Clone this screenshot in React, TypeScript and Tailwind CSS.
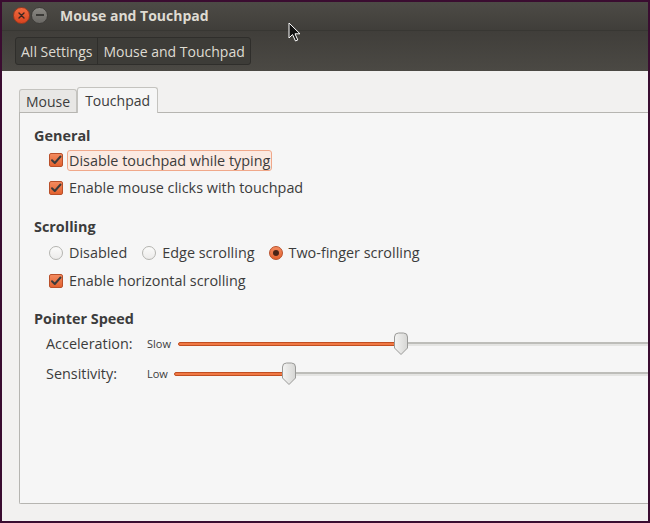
import React from 'react';

const font = { fontFamily: '"Open Sans", "Noto Sans", sans-serif' };

function CheckBox() {
    return (
        <span className="flex h-[14px] w-[14px] shrink-0 items-center justify-center rounded-[2px] border border-[#b9502a] bg-gradient-to-b from-[#f38a5e] to-[#e2622f]">
            <svg width="12" height="12" viewBox="0 0 12 12" fill="none">
                <path d="M2 6.2L4.8 9L10.5 2.5" stroke="#3b3b3b" strokeWidth="2" strokeLinecap="round" strokeLinejoin="round" />
            </svg>
        </span>
    );
}

function Radio({ on, className = '' }: { on?: boolean; className?: string }) {
    if (on) {
        return (
            <span className={`flex h-[14px] w-[14px] shrink-0 items-center justify-center rounded-full border border-[#b9502a] bg-gradient-to-b from-[#f38a5e] to-[#e2622f] ${className}`}>
                <span className="h-[6px] w-[6px] rounded-full bg-[#4a2417]" />
            </span>
        );
    }
    return <span className={`block h-[14px] w-[14px] shrink-0 rounded-full border border-[#b4b4b0] bg-gradient-to-b from-[#fbfbfa] to-[#ecebea] ${className}`} />;
}

function Thumb() {
    return (
        <svg width="16" height="24" viewBox="0 0 16 24" className="relative -mx-[8px] shrink-0">
            <defs>
                <linearGradient id="tg" x1="0" y1="0" x2="1" y2="0">
                    <stop offset="0" stopColor="#f4f4f3" />
                    <stop offset="1" stopColor="#d6d6d4" />
                </linearGradient>
            </defs>
            <path d="M1.5 5 Q1.5 1 5.5 1 H10.5 Q14.5 1 14.5 5 V16 L8 22.5 L1.5 16 Z" fill="url(#tg)" stroke="#9a9a98" strokeWidth="1" />
        </svg>
    );
}

function Slider({ label, small, fill, gap }: { label: string; small: string; fill: number; gap: number }) {
    return (
        <div className="flex h-[30px] items-center">
            <span className="w-[113px] pl-[12px] text-[#3c3c3c]">{label}</span>
            <span className="text-[11px] text-[#3c3c3c]">{small}</span>
            <div className="flex flex-1 items-center" style={{ marginLeft: gap }}>
                <div className="h-[4px] rounded-l-full border border-[#c14f22] bg-[#f07844]" style={{ width: fill }} />
                <Thumb />
                <div className="flex flex-1 flex-col">
                    <div className="h-[2px] bg-[#bdbdb9]" />
                    <div className="h-[2px] bg-[#e4e4e2]" />
                </div>
            </div>
        </div>
    );
}

export default function App() {
    return (
        <div className="relative h-[523px] w-[650px] overflow-hidden bg-[#3a0c30] p-[2px]" style={font}>
            <div className="flex h-full flex-col">
                {/* title bar */}
                <div className="flex h-[28px] items-center bg-gradient-to-b from-[#4d4b46] to-[#403e3a] pb-[2px] pl-[11px]">
                    <span className="flex h-[17px] w-[17px] items-center justify-center rounded-full border border-[#9a3a1f] bg-gradient-to-b from-[#f26a3f] to-[#d8441f]">
                        <svg width="7" height="7" viewBox="0 0 7 7">
                            <path d="M1 1L6 6M6 1L1 6" stroke="#3a2620" strokeWidth="1.4" strokeLinecap="round" />
                        </svg>
                    </span>
                    <span className="ml-[1px] flex h-[17px] w-[17px] items-center justify-center rounded-full border border-[#3f3d3a] bg-gradient-to-b from-[#8a8883] to-[#6a6864]">
                        <span className="h-[1.5px] w-[8px] bg-[#3a3936]" />
                    </span>
                    <span className="ml-[12px] text-[14px] font-bold text-[#dfdbd2]">Mouse and Touchpad</span>
                </div>
                {/* toolbar */}
                <div className="flex h-[41px] items-center border-t border-[#383733] bg-gradient-to-b from-[#403e3a] to-[#4b4944] pl-[13px]">
                    <div className="flex h-[28px] rounded-[3px] border border-[#2f2e2b] bg-[#3d3c38] text-[14px] text-[#dfdbd2]">
                        <span className="flex items-center px-[5px]">All Settings</span>
                        <span className="flex items-center border-l border-[#2f2e2b] px-[5px]">Mouse and Touchpad</span>
                    </div>
                </div>
                {/* content */}
                <div className="flex flex-1 flex-col bg-[#f2f1f0] pt-[17px] pb-[17px] pl-[17px] text-[#3c3c3c]">
                    <div className="flex h-[24px] items-end text-[14px]">
                        <span className="flex h-[23px] items-center rounded-t-[3px] border border-b-0 border-[#c4c3bf] bg-[#e8e7e5] px-[6px]">Mouse</span>
                        <span className="relative -mb-[1px] flex h-[26px] items-center rounded-t-[3px] border border-b-0 border-[#c4c3bf] bg-[#f6f6f6] px-[7px]">Touchpad</span>
                    </div>
                    <div className="flex-1 rounded-bl-[2px] border border-r-0 border-[#b6b5b1] bg-[#f6f6f6] pt-[13px] pl-[14px] text-[14.4px]">
                        <div className="h-[20px] leading-[20px] font-bold">General</div>
                        <div className="flex h-[28px] items-center pl-[15px]">
                            <CheckBox />
                            <span className="ml-[4px] rounded-[3px] border border-[#f0a88a] bg-[#fbeae2] px-[1px] leading-[19px]">Disable touchpad while typing</span>
                        </div>
                        <div className="flex h-[28px] items-center pl-[15px]">
                            <CheckBox />
                            <span className="ml-[4px] border border-transparent px-[1px]">Enable mouse clicks with touchpad</span>
                        </div>
                        <div className="mt-[15px] h-[20px] leading-[20px] font-bold">Scrolling</div>
                        <div className="mt-[2px] flex h-[28px] items-center pl-[15px]">
                            <Radio />
                            <span className="ml-[6px]">Disabled</span>
                            <Radio className="ml-[15px]" />
                            <span className="ml-[6px]">Edge scrolling</span>
                            <Radio on className="ml-[14px]" />
                            <span className="ml-[6px]">Two-finger scrolling</span>
                        </div>
                        <div className="flex h-[28px] items-center pl-[15px]">
                            <CheckBox />
                            <span className="ml-[4px] border border-transparent px-[1px]">Enable horizontal scrolling</span>
                        </div>
                        <div className="mt-[14px] h-[20px] leading-[20px] font-bold">Pointer Speed</div>
                        <Slider label="Acceleration:" small="Slow" fill={223} gap={7} />
                        <Slider label="Sensitivity:" small="Low" fill={115} gap={6} />
                    </div>
                </div>
            </div>
            {/* mouse pointer */}
            <svg className="absolute top-[22px] left-[288px]" width="14" height="20" viewBox="0 0 14 20">
                <path d="M1 1 V16 L4.5 12.5 L7.5 19 L9.8 18 L7 11.8 H12 Z" fill="#111" stroke="#fff" strokeWidth="1" strokeLinejoin="round" />
            </svg>
        </div>
    );
}
